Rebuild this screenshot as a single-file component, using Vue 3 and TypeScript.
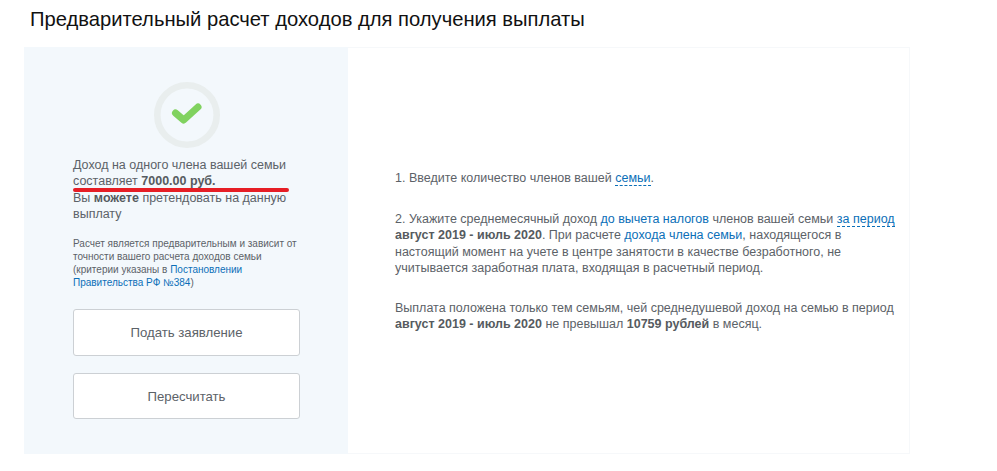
<script setup lang="ts">
const title: string = 'Предварительный расчет доходов для получения выплаты'
</script>

<template>
  <div class="page">
    <h1 class="title">{{ title }}</h1>
    <div class="card">
      <aside class="side">
        <svg class="status" width="66" height="66" viewBox="0 0 66 66">
          <circle cx="33" cy="33" r="29.7" fill="none" stroke="#e9eeee" stroke-width="6.6" />
          <path d="M21.5 31 L29.7 38 L44 25" fill="none" stroke="#80d25f" stroke-width="7" stroke-linecap="round" stroke-linejoin="round" />
        </svg>
        <div class="result">
          <p>Доход на одного члена вашей семьи<br />составляет <b>7000.00 руб.</b></p>
          <p>Вы <b>можете</b> претендовать на данную выплату</p>
          <span class="mark"></span>
        </div>
        <p class="note">
          Расчет является предварительным и зависит от точности вашего расчета доходов семьи (критерии указаны в
          <a>Постановлении Правительства РФ №384</a>)
        </p>
        <button class="btn first">Подать заявление</button>
        <button class="btn second">Пересчитать</button>
      </aside>
      <main class="info">
        <p class="step-one">1. Введите количество членов вашей <a class="dashed">семьи</a>.</p>
        <p class="step-two">
          2. Укажите среднемесячный доход <a>до вычета налогов</a> членов вашей семьи
          <a class="dashed">за период</a> <b>август 2019 - июль 2020</b>. При расчете
          <a>дохода члена семьи</a>, находящегося в настоящий момент на учете в центре занятости в качестве
          безработного, не учитывается заработная плата, входящая в расчетный период.
        </p>
        <p>
          Выплата положена только тем семьям, чей среднедушевой доход на семью в период
          <b>август 2019 - июль 2020</b> не превышал <b>10759 рублей</b> в месяц.
        </p>
      </main>
    </div>
  </div>
</template>

<style>
html,
body {
  margin: 0;
  background: #fff;
}
</style>

<style scoped>
.page {
  width: 997px;
  height: 471px;
  box-sizing: border-box;
  padding: 0 0 0 24px;
  overflow: hidden;
  font-family: "Liberation Sans", Arial, sans-serif;
  color: #5c6268;
}
p {
  margin: 0;
}
a {
  color: #0b6fb8;
}
b {
  font-weight: 700;
  color: #565b60;
}
.title {
  margin: 0;
  padding: 8px 0 0 6px;
  height: 47px;
  box-sizing: border-box;
  font-size: 20.2px;
  line-height: 22px;
  font-weight: 400;
  color: #111;
}
.card {
  display: flex;
  width: 886px;
  height: 407px;
}
.side {
  width: 324px;
  box-sizing: border-box;
  padding: 35px 48px 0 49px;
  background: #f3f8fc;
  display: flex;
  flex-direction: column;
  align-items: flex-start;
}
.status {
  align-self: center;
  flex: none;
  margin-left: 1px;
}
.result {
  position: relative;
  margin-top: 9px;
  font-size: 12.5px;
  line-height: 16.3px;
}
.mark {
  position: absolute;
  left: 0;
  top: 30.5px;
  width: 216px;
  height: 4px;
  border-radius: 2px;
  background: #e61e25;
}
.note {
  margin-top: 15px;
  font-size: 10px;
  line-height: 13px;
}
.btn {
  width: 227px;
  box-sizing: border-box;
  background: #fff;
  border: 1px solid #ccd0d4;
  border-radius: 3px;
  font: inherit;
  font-size: 13.2px;
  color: #5c6268;
  padding: 0;
}
.first {
  height: 47px;
  margin-top: 20px;
}
.second {
  height: 46px;
  margin-top: 17px;
}
.info {
  flex: 1;
  box-sizing: border-box;
  border: 1px solid #f6f8fa;
  border-left: 0;
  padding: 122px 13px 0 47px;
  font-size: 12.5px;
  line-height: 16.2px;
}
.dashed {
  border-bottom: 1px dashed #0b6fb8;
}
.step-one {
  margin-bottom: 25px;
}
.step-two {
  margin-bottom: 24px;
}
</style>
